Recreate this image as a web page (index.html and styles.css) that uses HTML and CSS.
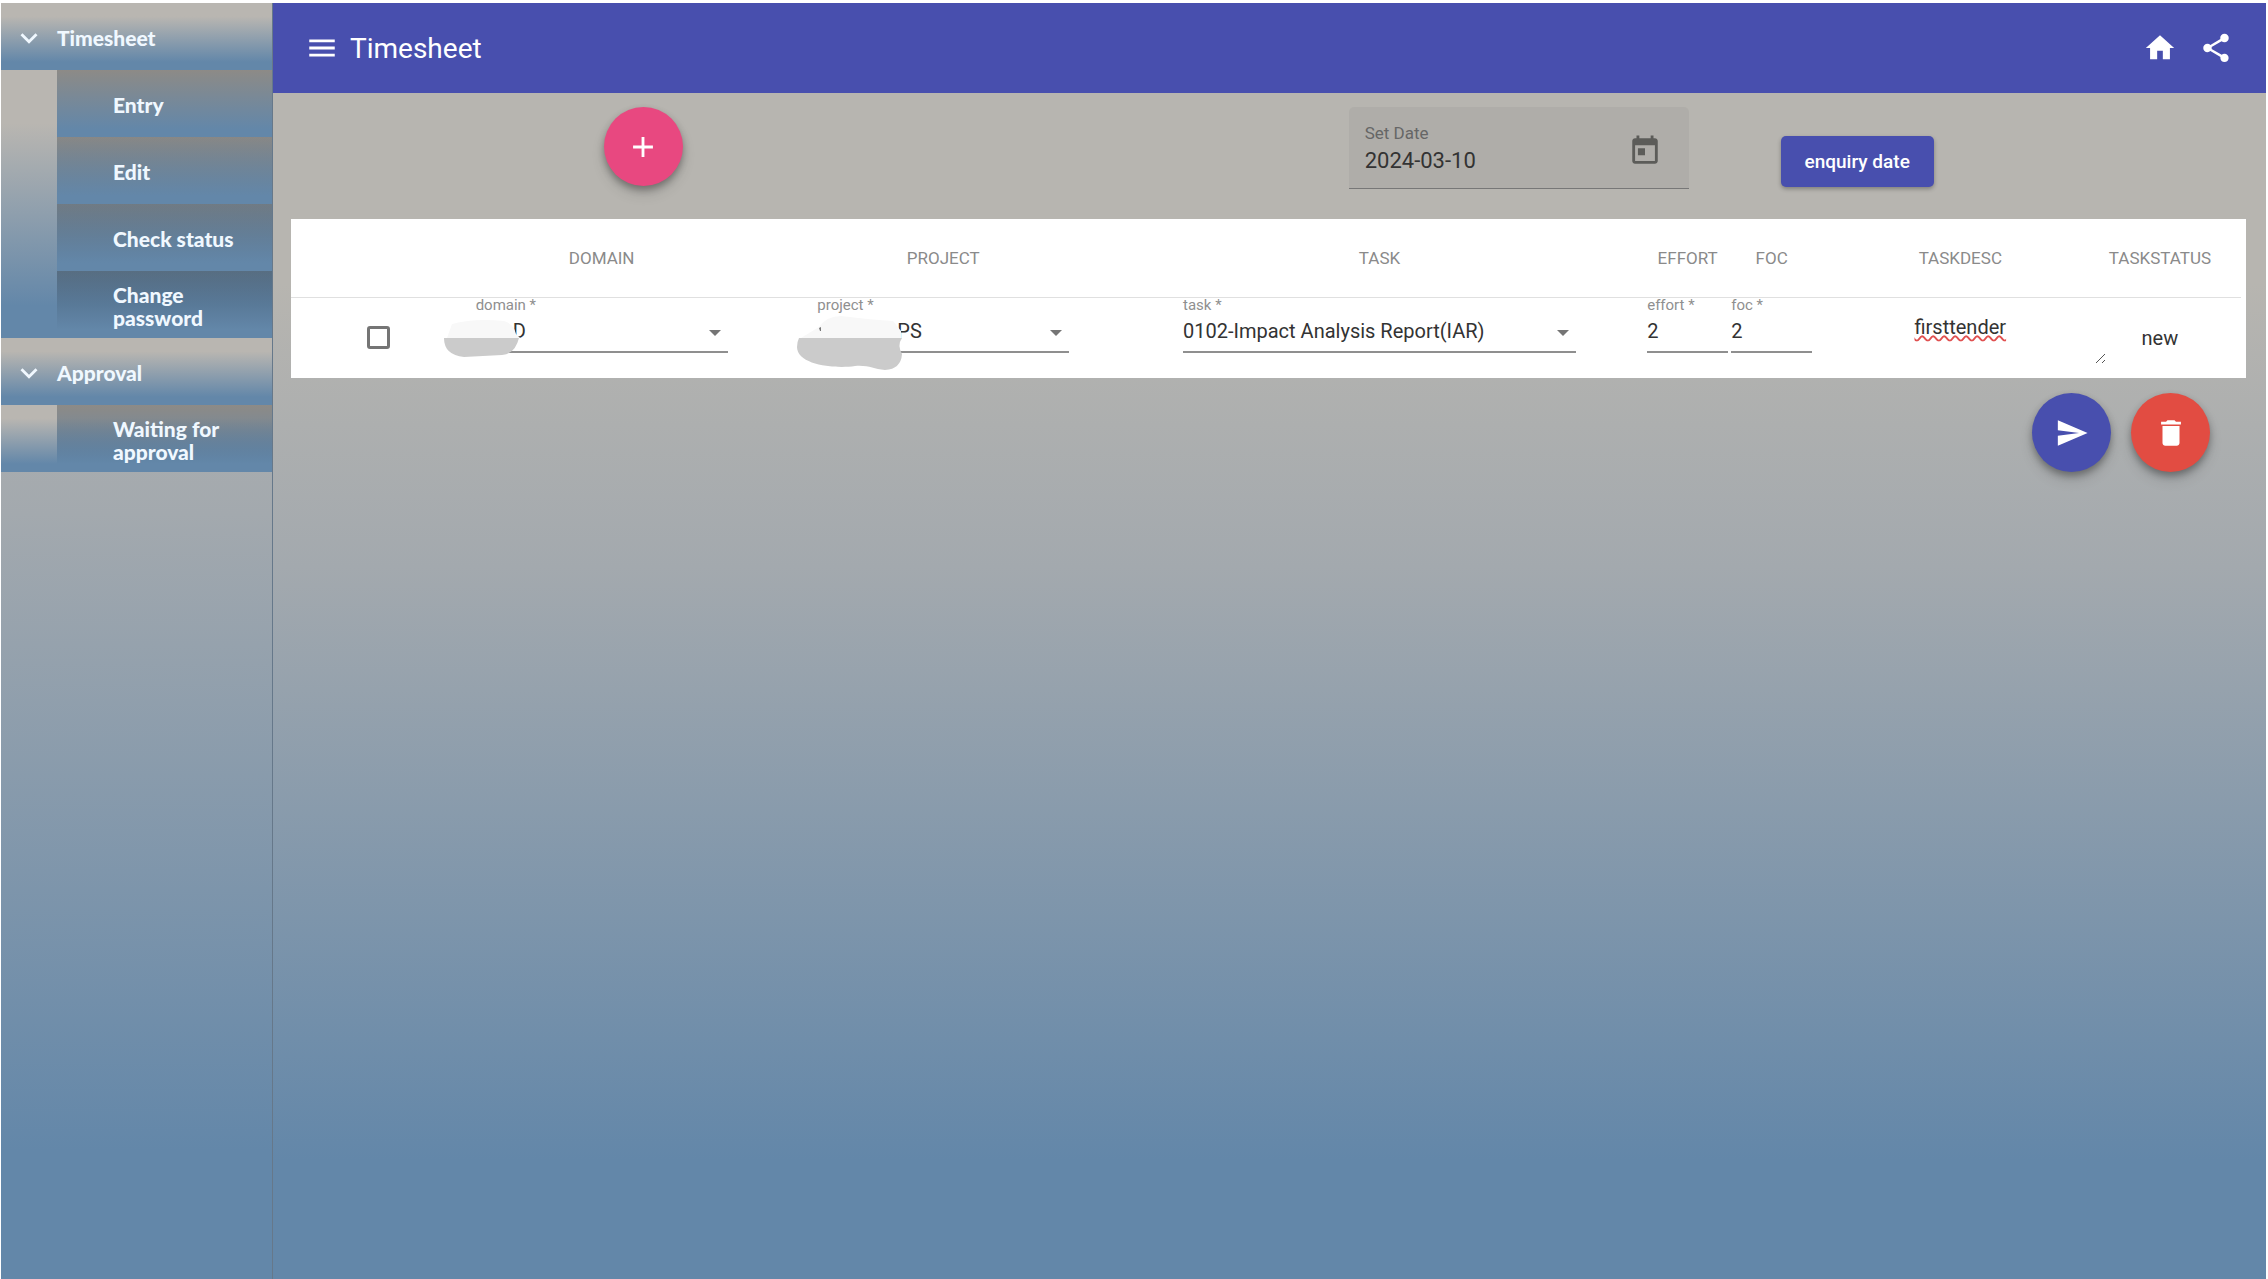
FILE: index.html
```html
<!DOCTYPE html>
<html lang="en">
<head>
<meta charset="utf-8">
<title>Timesheet</title>
<link rel="stylesheet" href="styles.css">
</head>
<body>
<div class="app">
  <nav class="sidebar">
    <button class="group-head" type="button">
      <svg class="icon" viewBox="0 0 24 24"><path d="M16.59 8.59 12 13.17 7.41 8.59 6 10l6 6 6-6z"/></svg>
      Timesheet
    </button>
    <ul class="group-list">
      <li><a class="nav-item" href="#entry">Entry</a></li>
      <li><a class="nav-item" href="#edit">Edit</a></li>
      <li><a class="nav-item" href="#status">Check status</a></li>
      <li><a class="nav-item" href="#password">Change password</a></li>
    </ul>
    <button class="group-head" type="button">
      <svg class="icon" viewBox="0 0 24 24"><path d="M16.59 8.59 12 13.17 7.41 8.59 6 10l6 6 6-6z"/></svg>
      Approval
    </button>
    <ul class="group-list">
      <li><a class="nav-item" href="#waiting">Waiting for approval</a></li>
    </ul>
  </nav>

  <div class="content">
    <header class="topbar">
      <button class="icon-button" type="button" aria-label="Menu">
        <svg class="icon" viewBox="0 0 24 24"><path d="M3 18h18v-2H3v2zm0-5h18v-2H3v2zm0-7v2h18V6H3z"/></svg>
      </button>
      <h1 class="title">Timesheet</h1>
      <div class="topbar-actions">
        <button class="icon-button" type="button" aria-label="Home">
          <svg class="icon" viewBox="0 0 24 24"><path d="M10 20v-6h4v6h5v-8h3L12 3 2 12h3v8z"/></svg>
        </button>
        <button class="icon-button" type="button" aria-label="Share">
          <svg class="icon" viewBox="0 0 24 24"><path d="M18 16.08c-.76 0-1.44.3-1.96.77L8.91 12.7c.05-.23.09-.46.09-.7s-.04-.47-.09-.7l7.05-4.11c.54.5 1.25.81 2.04.81 1.66 0 3-1.34 3-3s-1.34-3-3-3-3 1.34-3 3c0 .24.04.47.09.7L8.04 9.81C7.5 9.31 6.79 9 6 9c-1.66 0-3 1.34-3 3s1.34 3 3 3c.79 0 1.5-.31 2.04-.81l7.12 4.16c-.05.21-.08.43-.08.65 0 1.61 1.31 2.92 2.92 2.92s2.92-1.31 2.92-2.92-1.31-2.92-2.92-2.92z"/></svg>
        </button>
      </div>
    </header>

    <main class="page">
      <div class="toolbar">
        <div class="toolbar-add">
          <button class="fab fab-add" type="button" aria-label="Add row">
            <svg class="icon" viewBox="0 0 24 24"><path d="M19 13h-6v6h-2v-6H5v-2h6V5h2v6h6v2z"/></svg>
          </button>
        </div>
        <div class="date-field">
          <div class="date-text">
            <label class="date-label" for="set-date">Set Date</label>
            <input class="date-input" id="set-date" type="text" value="2024-03-10">
          </div>
          <button class="icon-button date-button" type="button" aria-label="Open calendar">
            <svg class="icon" viewBox="0 0 24 24"><path d="M19 3h-1V1h-2v2H8V1H6v2H5c-1.11 0-1.99.9-1.99 2L3 19c0 1.1.89 2 2 2h14c1.1 0 2-.9 2-2V5c0-1.1-.9-2-2-2zm0 16H5V8h14v11zM7 10h5v5H7z"/></svg>
          </button>
        </div>
        <button class="enquiry" type="button">enquiry date</button>
      </div>

      <div class="table-card">
        <table class="entries">
          <colgroup>
            <col class="col-check"><col class="col-domain"><col class="col-project"><col class="col-task">
            <col class="col-num"><col class="col-num"><col class="col-desc"><col class="col-status">
          </colgroup>
          <thead>
            <tr>
              <th></th><th>DOMAIN</th><th>PROJECT</th><th class="cell-task">TASK</th>
              <th>EFFORT</th><th>FOC</th><th>TASKDESC</th><th class="cell-status">TASKSTATUS</th>
            </tr>
          </thead>
          <tbody>
            <tr>
              <td class="cell-middle"><input class="check" type="checkbox" aria-label="Select row"></td>
              <td>
                <div class="field field-short">
                  <label class="field-label" for="domain">domain *</label>
                  <select class="field-control domain-value" id="domain"><option>D</option></select>
                  <svg class="arrow" viewBox="0 0 12 6"><path d="M0 0h12L6 6z"/></svg>
                  <svg class="smudge smudge-domain" viewBox="0 0 76 40">
                    <path fill="#f8f8f8" d="M3 20 8 6Q30 0 60 3Q70 6 72 16L76 20z"/>
                    <path fill="#cbcbcb" d="M0 20H75Q71 36 58 37L20 39Q0 37 0 20z"/>
                  </svg>
                </div>
              </td>
              <td>
                <div class="field field-short">
                  <label class="field-label" for="project">project *</label>
                  <select class="field-control project-value" id="project"><option>PS</option></select>
                  <svg class="arrow" viewBox="0 0 12 6"><path d="M0 0h12L6 6z"/></svg>
                  <svg class="smudge smudge-project" viewBox="0 0 106 56">
                    <path fill="#f8f8f8" d="M4 23 22 12Q30 1 44 1Q76 5 96 6L104 16V23z"/>
                    <path fill="#cbcbcb" d="M2 23H105Q100 30 105 39Q104 54 88 55C76 54 72 50 58 51C38 54 0 50 0 32Q0 27 2 23z"/>
                    <path fill="#777" d="M22 13l2-1v4h-1z"/>
                  </svg>
                </div>
              </td>
              <td class="cell-task">
                <div class="field field-long">
                  <label class="field-label" for="task">task *</label>
                  <select class="field-control" id="task"><option>0102-Impact Analysis Report(IAR)</option></select>
                  <svg class="arrow" viewBox="0 0 12 6"><path d="M0 0h12L6 6z"/></svg>
                </div>
              </td>
              <td>
                <div class="field field-num">
                  <label class="field-label" for="effort">effort *</label>
                  <input class="field-control" id="effort" type="text" value="2">
                </div>
              </td>
              <td>
                <div class="field field-num">
                  <label class="field-label" for="foc">foc *</label>
                  <input class="field-control" id="foc" type="text" value="2">
                </div>
              </td>
              <td>
                <div class="desc">
                  <textarea class="desc-input" aria-label="Task description">firsttender</textarea>
                  <svg class="grip" viewBox="0 0 11 11"><path d="M1 10 10 1M7 10l3-3"/></svg>
                </div>
              </td>
              <td class="cell-middle cell-status">new</td>
            </tr>
          </tbody>
        </table>
      </div>

      <div class="row-actions">
        <button class="fab fab-send" type="button" aria-label="Send">
          <svg class="icon" viewBox="0 0 24 24"><path d="M2.01 21 23 12 2.01 3 2 10l15 2-15 2z"/></svg>
        </button>
        <button class="fab fab-delete" type="button" aria-label="Delete">
          <svg class="icon" viewBox="0 0 24 24"><path d="M6 19c0 1.1.9 2 2 2h8c1.1 0 2-.9 2-2V7H6v12zM19 4h-3.500l-1-1h-5l-1 1H5v2h14V4z"/></svg>
        </button>
      </div>
    </main>
  </div>
</div>
</body>
</html>
```
FILE: styles.css
```css
:root {
  --stone: #b9b6b1;
  --steel: #6387a9;
  --indigo: #484fae;
  --fade: linear-gradient(#b7b5b0 16%, #a3a9ae 40%, var(--steel) 90%);
}

* { box-sizing: border-box; }

body {
  margin: 0;
  background: #fff;
  color: #333;
  font-family: Roboto, "Liberation Sans", sans-serif;
}

button, input, select, textarea { font: inherit; color: inherit; }
button { border: 0; padding: 0; background: none; }

.icon {
  display: block;
  flex: none;
  width: 34px;
  height: 34px;
  fill: currentColor;
}

.app {
  display: flex;
  min-height: 100vh;
  padding: 3px 2px 0 1px;
}

/* Sidebar */
.sidebar {
  flex: none;
  width: 272px;
  border-right: 1px solid #66788a;
  background: var(--fade);
  color: #f0f8ff;
  font-family: Lato, "Gill Sans", sans-serif;
  font-size: 21px;
  font-weight: 900;
  line-height: 23px;
}

.group-head {
  display: flex;
  align-items: center;
  gap: 11px;
  width: 100%;
  height: 67px;
  padding: 2px 0 0 11px;
  background: linear-gradient(var(--stone) 20%, var(--steel) 88%);
}

.group-list {
  margin: 0;
  padding: 0 0 0 56px;
  list-style: none;
  background: linear-gradient(var(--stone) 20%, var(--steel) 88%);
}

.nav-item {
  display: flex;
  align-items: center;
  height: 67px;
  padding: 2px 32px 0 56px;
  background: linear-gradient(rgba(0, 0, 0, 0.24), var(--steel) 88%);
  color: inherit;
  text-decoration: none;
}

/* Top bar */
.content {
  display: flex;
  flex: 1;
  flex-direction: column;
  min-width: 0;
}

.topbar {
  display: flex;
  align-items: center;
  gap: 11px;
  height: 90px;
  padding: 0 33px 0 32px;
  background: var(--indigo);
  color: #fff;
}

.title {
  margin: 0;
  font-size: 28px;
  font-weight: 400;
}

.topbar-actions {
  display: flex;
  gap: 22px;
  margin-left: auto;
}

/* Page */
.page {
  flex: 1;
  padding: 14px 20px 20px 18px;
  background: var(--fade);
}

.toolbar {
  display: flex;
  height: 112px;
}

.toolbar-add {
  width: 54%;
  padding-left: 16%;
}

.fab {
  display: flex;
  align-items: center;
  justify-content: center;
  width: 79px;
  height: 79px;
  border-radius: 50%;
  color: #fff;
  box-shadow: 0 4px 7px rgba(0, 0, 0, 0.3), 0 8px 14px rgba(0, 0, 0, 0.12);
}

.fab-add { background: #e84880; }
.fab-send { background: var(--indigo); }
.fab-delete { background: #e24c42; }

.date-field {
  display: flex;
  align-items: center;
  width: 340px;
  height: 82px;
  margin-left: 2px;
  padding: 0 27px 0 16px;
  border-bottom: 1px solid #777;
  border-radius: 5px 5px 0 0;
  background: rgba(0, 0, 0, 0.04);
}

.date-text {
  display: flex;
  flex: 1;
  flex-direction: column;
  min-width: 0;
}

.date-label {
  color: #666;
  font-size: 17px;
  line-height: 26px;
}

.date-input {
  width: 100%;
  height: 30px;
  padding: 0;
  border: 0;
  background: none;
  font-size: 22px;
}

.date-button {
  padding-top: 6px;
  color: #5c5c59;
}

.enquiry {
  width: 153px;
  height: 51px;
  margin: 29px 0 0 92px;
  border-radius: 5px;
  background: var(--indigo);
  box-shadow: 0 2px 4px rgba(0, 0, 0, 0.3);
  color: #fff;
  font-size: 19px;
  font-weight: 500;
}

/* Table */
.table-card {
  padding-right: 5px;
  background: #fff;
}

.entries {
  width: 100%;
  table-layout: fixed;
  border-collapse: collapse;
  text-align: center;
}

.col-check { width: 174px; }
.col-domain { width: 273px; }
.col-project { width: 410px; }
.col-task { width: 497px; }
.col-num { width: 84px; }
.col-desc { width: 293px; }
.col-status { width: 134px; }

.entries th {
  height: 78px;
  padding: 0;
  border-bottom: 1px solid #e0e0e0;
  color: #8a8a8a;
  font-size: 17px;
  font-weight: 400;
}

.entries td {
  height: 81px;
  padding: 0;
  font-size: 20px;
  vertical-align: top;
}

.entries .cell-task { padding-right: 35px; }
.entries .cell-status { padding-right: 28px; }
.entries .cell-middle { vertical-align: middle; }

.check {
  display: block;
  width: 23px;
  height: 23px;
  margin: 0 auto;
  border: 3px solid #757575;
  border-radius: 3px;
  appearance: none;
}

.field {
  position: relative;
  display: flex;
  flex-direction: column;
  margin: 0 auto;
  text-align: left;
}

.field-short { width: 252px; }
.field-long { width: 393px; }
.field-num { width: 81px; }

.field-label {
  color: #8f8f8f;
  font-size: 15px;
  line-height: 14px;
}

.field-control {
  width: 100%;
  height: 41px;
  padding: 0;
  border: 0;
  border-bottom: 2px solid #8f8f8f;
  border-radius: 0;
  background: none;
  appearance: none;
}

.domain-value { padding-left: 37px; }
.project-value { padding-left: 80px; }

.arrow {
  position: absolute;
  top: 32px;
  right: 7px;
  width: 12px;
  height: 6px;
  fill: #757575;
  pointer-events: none;
}

.smudge {
  position: absolute;
  pointer-events: none;
}

.smudge-domain {
  top: 20px;
  left: -32px;
  width: 76px;
  height: 40px;
}

.smudge-project {
  top: 17px;
  left: -20px;
  width: 106px;
  height: 56px;
}

.desc {
  position: relative;
  height: 66px;
}

.desc-input {
  display: block;
  width: 100%;
  height: 100%;
  padding: 17px 0 0;
  border: 0;
  background: none;
  line-height: 24px;
  text-align: center;
  text-decoration: underline wavy #e05050 2px;
  resize: none;
}

.grip {
  position: absolute;
  right: 1px;
  bottom: 0;
  width: 11px;
  height: 11px;
  stroke: #555;
}

.row-actions {
  display: flex;
  justify-content: flex-end;
  gap: 20px;
  padding: 15px 36px 0 0;
}
```
